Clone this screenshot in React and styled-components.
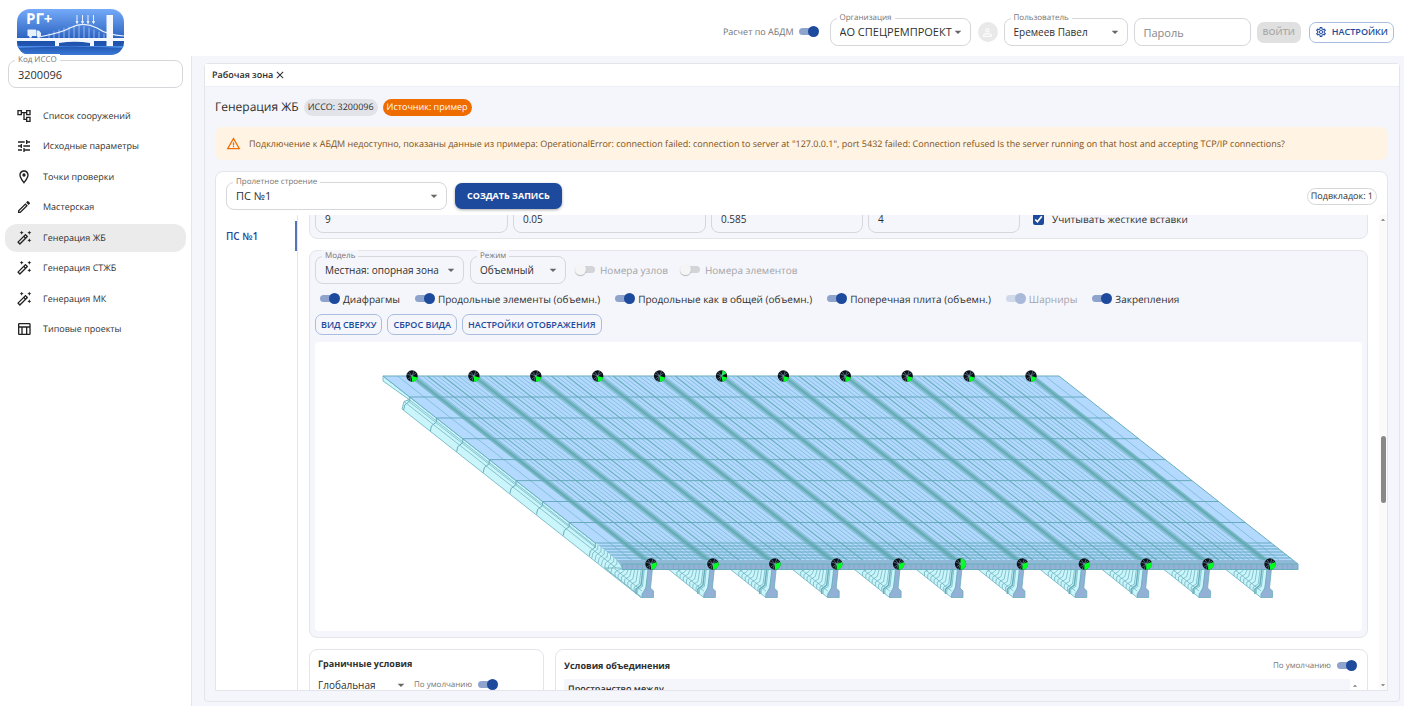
import React, { useId } from "react";
import styled, { createGlobalStyle, css } from "styled-components";
import {
  MdOutlineAccountTree,
  MdTune,
  MdOutlineLocationOn,
  MdOutlineEdit,
  MdOutlineAutoFixHigh,
  MdOutlineTableChart,
  MdOutlineSettings,
  MdWarningAmber,
  MdPersonOutline,
  MdArrowDropDown,
  MdArrowDropUp,
  MdClose,
} from "react-icons/md";

const c = {
  primary: "#1d4a9c",
  primaryBorder: "#a9bde0",
  text: "#2f2f2f",
  muted: "#757575",
  disabled: "#a3a4a7",
  border: "#d6d7db",
  line: "#e3e5ea",
  bg: "#f5f6fb",
};

const GlobalStyle = createGlobalStyle`
  *, *::before, *::after { box-sizing: border-box; }
  body {
    margin: 0;
    background: #fff;
    color: ${c.text};
    font-family: "Open Sans", "Noto Sans", sans-serif;
    font-size: 10px;
    line-height: 16px;
    text-rendering: geometricPrecision;
  }
  button, input, select { font: inherit; color: inherit; margin: 0; }
  h1, h2, p, ul { margin: 0; padding: 0; font-weight: 400; }
`;

/* ---------- shell ---------- */

const Shell = styled.div`
  display: grid;
  grid-template-columns: 191px minmax(0, 1fr);
  height: 100vh;
  padding: 0 17px 11px 0;
  overflow: hidden;
`;

const Sidebar = styled.aside`
  display: flex;
  flex-direction: column;
  padding: 9px 8px 0;
`;

const Main = styled.div`
  display: flex;
  flex-direction: column;
  min-width: 0;
  min-height: 0;
`;

const TopBar = styled.header`
  display: flex;
  flex: none;
  align-items: center;
  justify-content: flex-end;
  gap: 11px;
  height: 56px;
  padding: 8px 10px 0 0;
`;

const LoginGroup = styled.div`
  display: flex;
  align-items: center;
  gap: 6px;
`;

const ButtonGroup = styled.div`
  display: flex;
  align-items: center;
  gap: 8px;
`;

const Desk = styled.main`
  display: flex;
  flex: 1;
  min-height: 0;
  padding: 7px 4px 4px 12px;
  background: ${c.bg};
  border-left: 1px solid ${c.line};
`;

const Workspace = styled.section`
  display: flex;
  flex: 1;
  flex-direction: column;
  min-width: 0;
  border: 1px solid ${c.line};
  border-radius: 4px;
`;

/* ---------- form parts ---------- */

const FieldBox = styled.div`
  position: relative;
  display: flex;
  flex: none;
  width: ${(p) => p.$w || "auto"};
  min-width: 0;
  height: 28px;
`;

const FieldLabel = styled.label`
  position: absolute;
  top: -6px;
  left: 7px;
  padding: 0 3px;
  background: ${(p) => p.$bg || "#fff"};
  color: ${c.muted};
  font-size: 8px;
  line-height: 12px;
  white-space: nowrap;
`;

const control = css`
  width: 100%;
  height: 100%;
  padding: 0 9px;
  border: 1px solid ${c.border};
  border-radius: 8px;
  background: transparent;
  font-size: ${(p) => p.$size || 11}px;
  outline: none;
`;

const TextInput = styled.input`
  ${control}
  &::placeholder { color: #85868a; opacity: 1; }
`;

const SelectInput = styled.select`
  ${control}
  appearance: none;
  ${(p) => p.$plain && css`border: 0; padding: 0;`}
`;

const Arrow = styled(MdArrowDropDown)`
  position: absolute;
  right: ${(p) => p.$right ?? 5}px;
  top: 6px;
  width: 16px;
  height: 16px;
  color: #666;
  pointer-events: none;
`;

const Switch = styled.input.attrs({ type: "checkbox", role: "switch" })`
  position: relative;
  flex: none;
  appearance: none;
  width: 20px;
  height: 12px;
  opacity: ${(p) => (p.disabled && p.defaultChecked ? 0.35 : 1)};
  &::before {
    content: "";
    position: absolute;
    inset: 2px 0 3px 2px;
    border-radius: 4px;
    background: #d3d4d8;
  }
  &::after {
    content: "";
    position: absolute;
    top: 0;
    left: 0;
    width: 11px;
    height: 11px;
    border-radius: 50%;
    background: #f5f5f5;
    box-shadow: 0 1px 1px rgba(0, 0, 0, 0.25);
  }
  &:checked::before { inset: 2px 3px 3px 0; background: #8ea4cd; }
  &:checked::after { left: 9px; background: ${c.primary}; box-shadow: none; }
`;

const SwitchLabel = styled.label`
  display: flex;
  align-items: center;
  gap: ${(p) => p.$gap || 3}px;
  color: ${(p) => (p.$tone ? c[p.$tone] : c.text)};
  font-size: ${(p) => p.$size || 10}px;
  white-space: nowrap;
`;

const OutlineButton = styled.button`
  display: flex;
  align-items: center;
  gap: 5px;
  height: 21px;
  padding: 0 5px;
  border: 1px solid ${c.primaryBorder};
  border-radius: 7px;
  background: transparent;
  color: ${c.primary};
  font-size: 9px;
  font-weight: 600;
  white-space: nowrap;
`;

const DisabledButton = styled(OutlineButton)`
  padding: 0 6px;
  border: 0;
  background: #e0e0e0;
  color: #a9a9a9;
`;

const PrimaryButton = styled.button`
  height: 26px;
  padding: 0 12px;
  border: 0;
  border-radius: 7px;
  background: ${c.primary};
  box-shadow: 0 1px 3px rgba(0, 0, 0, 0.35);
  color: #fff;
  font-size: 9px;
  font-weight: 700;
  white-space: nowrap;
`;

const Chip = styled.span`
  display: inline-flex;
  align-items: center;
  height: 17px;
  padding: 0 3px;
  border-radius: 9px;
  font-size: 9px;
  white-space: nowrap;
  background: ${(p) => p.$bg || "transparent"};
  color: ${(p) => p.$color || c.text};
  border: 1px solid ${(p) => p.$border || "transparent"};
`;

function SelectField({ label, value, w, bg, size }) {
  const id = useId();
  return (
    <FieldBox $w={w}>
      <SelectInput id={id} defaultValue={value} $size={size}>
        <option>{value}</option>
      </SelectInput>
      <FieldLabel htmlFor={id} $bg={bg}>{label}</FieldLabel>
      <Arrow />
    </FieldBox>
  );
}

/* ---------- sidebar ---------- */

const Logo = styled.svg`
  display: block;
  flex: none;
  width: 107px;
  height: 46px;
  margin: 0 0 5px 9px;
`;

const NavList = styled.ul`
  display: flex;
  flex-direction: column;
  justify-content: space-between;
  height: 241px;
  margin: 14px -3px 0 -3px;
  list-style: none;
`;

const NavLink = styled.a`
  display: flex;
  align-items: center;
  gap: 11px;
  height: 28px;
  padding-left: 11px;
  border-radius: 12px;
  background: ${(p) => (p.$active ? "#ebebeb" : "transparent")};
  color: ${c.text};
  font-size: 9px;
  text-decoration: none;
  svg { width: 16px; height: 16px; color: #222; }
`;

const NAV = [
  [MdOutlineAccountTree, "Список сооружений"],
  [MdTune, "Исходные параметры"],
  [MdOutlineLocationOn, "Точки проверки"],
  [MdOutlineEdit, "Мастерская"],
  [MdOutlineAutoFixHigh, "Генерация ЖБ", true],
  [MdOutlineAutoFixHigh, "Генерация СТЖБ"],
  [MdOutlineAutoFixHigh, "Генерация МК"],
  [MdOutlineTableChart, "Типовые проекты"],
];

function BrandLogo() {
  const hangers = [];
  for (let x = 32; x < 88; x += 5) {
    const y = x < 66 ? 27 - 11 * Math.sin(((x - 26) / 40) * 1.57) : 16 + (x - 66) * 0.42;
    hangers.push(<path key={x} d={`M${x} ${y}V29`} />);
  }
  return (
    <Logo viewBox="0 0 107 46" role="img" aria-label="РГ+">
      <defs>
        <linearGradient id="sky" x1="0" y1="0" x2="0" y2="1">
          <stop offset="0" stopColor="#74aaf8" />
          <stop offset="0.6" stopColor="#3168c4" />
          <stop offset="0.68" stopColor="#1c50a8" />
          <stop offset="0.8" stopColor="#2156b2" />
          <stop offset="1" stopColor="#3a78d6" />
        </linearGradient>
        <clipPath id="logo-shape"><rect width="107" height="46" rx="13" /></clipPath>
      </defs>
      <g clipPath="url(#logo-shape)">
        <rect width="107" height="46" fill="url(#sky)" />
        <path d="M0 37H107V39Q54 36 0 39Z" fill="#4d8ae2" />
        <g stroke="#b9d4fb" strokeWidth="0.7" fill="none">{hangers}</g>
        <path d="M22 28Q44 24 54 18.500Q67 12 80 19Q90 26 107 27" stroke="#eaf2ff" strokeWidth="1.200" fill="none" />
        <path d="M0 29H107V32H77V37H73V34Q58 31.500 42 34V37H38V32H0Z" fill="#f3f8ff" />
        <rect x="89.500" y="6" width="6.500" height="31" fill="#f5f9ff" />
        <g fill="#e8f1ff">
          <rect x="10.500" y="20.500" width="8.500" height="6.500" rx="0.500" />
          <path d="M19.500 21.500H22L24 24V27H19.500Z" />
          <circle cx="13.500" cy="27.500" r="1.400" />
          <circle cx="21.500" cy="27.500" r="1.400" />
        </g>
        <g stroke="#e6f0ff" strokeWidth="1" fill="#e6f0ff">
          {[60, 65.5, 71, 76.5].map((x) => (
            <path key={x} d={`M${x} 6V14M${x - 1} 12.500L${x} 14.500L${x + 1} 12.500Z`} />
          ))}
        </g>
        <text x="9" y="15" fill="#fff" fontFamily="Open Sans, sans-serif" fontSize="15" fontWeight="700">РГ+</text>
      </g>
    </Logo>
  );
}

/* ---------- workspace ---------- */

const TabBar = styled.div`
  display: flex;
  flex: none;
  align-items: center;
  gap: 1px;
  height: 23px;
  padding-left: 7px;
  background: #fff;
  border-bottom: 1px solid #eceef3;
  font-size: 9px;
  font-weight: 600;
`;

const IconButton = styled.button`
  display: flex;
  padding: 0;
  border: 0;
  background: none;
  svg { width: 12px; height: 12px; }
`;

const Page = styled.div`
  display: flex;
  flex: 1;
  flex-direction: column;
  gap: 11px;
  min-height: 0;
  padding: 11px 11px 10px 10px;
`;

const TitleRow = styled.div`
  display: flex;
  align-items: center;
  gap: 5px;
  height: 18px;
`;

const Title = styled.h1`
  font-size: 12px;
  line-height: 18px;
`;

const Alert = styled.p`
  display: flex;
  flex: none;
  align-items: center;
  gap: 8px;
  height: 33px;
  padding: 0 11px;
  border-radius: 8px;
  background: #fff3e4;
  color: #7d5215;
  font-size: 9px;
  white-space: nowrap;
  svg { width: 15px; height: 15px; color: #ef6c00; flex: none; }
`;

const Sheet = styled.section`
  display: flex;
  flex: 1;
  flex-direction: column;
  min-height: 0;
  border: 1px solid ${c.line};
  border-radius: 8px 8px 0 0;
  background: #fff;
`;

const SheetHead = styled.div`
  display: flex;
  flex: none;
  align-items: center;
  gap: 8px;
  height: 43px;
  padding: 5px 10px 0 10px;
  > :last-child { margin-left: auto; }
`;

const SheetBody = styled.div`
  display: grid;
  flex: 1;
  grid-template-columns: 82px minmax(0, 1fr) 19px;
  min-height: 0;
  overflow: hidden;
`;

const SideTabs = styled.div`
  padding-top: 6px;
  border-right: 1px solid ${c.line};
`;

const SideTab = styled.button`
  display: block;
  width: 100%;
  height: 30px;
  padding: 0 0 0 10px;
  border: 0;
  border-right: 2px solid #5475b5;
  background: none;
  color: ${c.primary};
  font-size: 10px;
  font-weight: 600;
  text-align: left;
`;

const Scroller = styled.div`
  display: flex;
  flex-direction: column;
  gap: 11px;
  min-height: 0;
  padding-left: 11px;
  overflow: hidden;
  > :first-child { margin-top: -16px; }
`;

const Card = styled.section`
  flex: none;
  padding: 5px 5px ${(p) => p.$pb || 6}px;
  border: 1px solid ${c.line};
  border-radius: 8px;
  background: ${(p) => (p.$white ? "#fff" : c.bg)};
`;

const FieldRow = styled.div`
  display: grid;
  grid-template-columns: 193px 193px 152px 152px 1fr;
  gap: 5px;
  align-items: center;
`;

const CheckLabel = styled.label`
  display: flex;
  align-items: center;
  gap: 8px;
  padding-left: 8px;
`;

const Checkbox = styled.input.attrs({ type: "checkbox" })`
  width: 11px;
  height: 11px;
  accent-color: ${c.primary};
`;

const ToolRow = styled.div`
  display: flex;
  align-items: center;
  gap: ${(p) => p.$gap}px;
  height: ${(p) => p.$h}px;
  padding-left: ${(p) => p.$pl || 0}px;
`;

const Viewer = styled.svg`
  display: block;
  width: 100%;
  height: 289px;
  margin-top: 7px;
  background: #fff;
  border-radius: 4px;
`;

const TrackColumn = styled.div`
  display: flex;
  flex-direction: column;
  align-items: center;
  justify-self: end;
  width: 8px;
  background: #fbfbfb;
  color: #777;
  svg { width: 10px; height: 10px; flex: none; }
`;

const Thumb = styled.div`
  flex: 67 0 0;
  width: 5px;
  border-radius: 3px;
  background: #898989;
`;

const Spacer = styled.div`
  flex: ${(p) => p.$grow} 0 0;
`;

const CardPair = styled.div`
  display: grid;
  flex: none;
  grid-template-columns: 235px minmax(0, 1fr);
  gap: 11px;
`;

const SubCard = styled(Card)`
  height: 120px;
  padding: 6px 8px;
`;

const SubHead = styled.div`
  display: flex;
  align-items: center;
  justify-content: space-between;
  height: ${(p) => p.$h}px;
  padding-right: 2px;
`;

const SubTitle = styled.h2`
  font-size: 9px;
  font-weight: 700;
`;

const MiniTable = styled.div`
  display: flex;
  justify-content: space-between;
  height: 80px;
  margin-top: 3px;
  background: ${c.bg};
`;

const MiniHead = styled.div`
  padding: 4px;
  font-size: 9px;
  line-height: 12px;
  font-weight: 600;
`;

const MiniTrack = styled.div`
  display: flex;
  flex-direction: column;
  width: 9px;
  padding-top: 2px;
  background: #fff;
  color: #777;
  svg { width: 10px; height: 10px; }
`;

const Avatar = styled.span`
  display: grid;
  place-items: center;
  width: 20px;
  height: 20px;
  margin-left: 1px;
  border-radius: 50%;
  background: #e9e9e9;
  color: #fff;
  svg { width: 13px; height: 13px; }
`;

/* ---------- bridge model ---------- */

const PITCH = 61.9;
const RUN = 239 / 188;
const TEAL = "#69aebb";

function line(x, y1, y2) {
  return `M${x + (y1 - 376) * RUN} ${y1}L${x + (y2 - 376) * RUN} ${y2}`;
}

function Support({ x, y, kind }) {
  const wedge = {
    back: "M0 0L5.500 1.500A5.700 5.700 0 0 1 0 5.700Z",
    front: "M0 0L5.500 -2A5.700 5.700 0 0 1 0 5.700Z",
    mid: "M0 0L1 -5.600A5.700 5.700 0 0 1 5 -2.600ZM0 0L5.500 1.500A5.700 5.700 0 0 1 1 5.600Z",
    half: "M0 0L0 -5.700A5.700 5.700 0 0 1 0 5.700Z",
  }[kind];
  return (
    <g transform={`translate(${x} ${y})`}>
      <circle r="5.700" fill="#0c0f16" />
      <path d={wedge} fill="#00ff22" />
      <path d="M-5 -2L0 0L-2 5M2 -5L0 0M-4 3L0 0L-3 -4M0 0L4 -3" stroke="#8fb6d2" strokeWidth="0.500" fill="none" />
    </g>
  );
}

function BridgeModel() {
  const girders = Array.from({ length: 11 }, (_, i) => i);
  const fine = [];
  const strong = [];
  const bands = [];
  girders.forEach((i) => {
    const x = 412 + i * PITCH;
    bands.push(`M${x - 4} 376H${x + 4}L${x + 243} 564H${x + 235}Z`);
    if (i < 10) {
      for (let k = 1; k < 12; k += 1) {
        const target = k === 6 || k === 3 ? strong : fine;
        target.push(line(x + k * 5.16, 376, 564));
      }
    }
  });
  fine.push(line(397.500, 376, 564), line(1045, 376, 564));
  const rows = [397, 418, 438.700, 459.600, 480.600, 501.500, 522.500, 543, 546, 549, 552, 555, 558, 561, 564];
  const sideSteps = [397, 418, 438.700, 459.600, 480.600, 501.500, 522.500, 543];
  const denseSteps = [545, 547.500, 550, 552.500, 555, 557.500, 560];
  const jog = (y) => {
    const x = 383 + (y - 376) * RUN;
    return `M${x} ${y}V${y + 4}L${x - 5} ${y + 8}L${x - 6} ${y + 13}`;
  };
  return (
    <Viewer viewBox="315 342 1047 289" role="img" aria-label="Объемная модель пролетного строения">
      <path d="M383 376L622 564L653 566L641 597.500L402 409L404 401.500L409 399.500L383 381Z" fill="#c9f5fb" stroke={TEAL} strokeWidth="0.800" />
      <g fill="none" stroke={TEAL} strokeWidth="0.700">
        <path d="M409 399.500L622 567M404 401.500L643 589M407 400L646 587" />
        {sideSteps.map((y) => <path key={y} d={jog(y)} strokeWidth="1" />)}
      </g>
      {girders.map((i) => {
        const x = 651 + i * PITCH;
        return (
          <g key={i}>
            <path d={`M${x - 46} 568H${x - 2}L${x - 5} 587L${x - 9} 597.500Z`} fill="#c9f5fb" stroke={TEAL} strokeWidth="0.800" />
            <g stroke={TEAL} strokeWidth="0.700" fill="none">
              {[0, 1, 2, 3, 4, 5, 6, 7].map((k) => {
                const bx = x - 36 + k * 3.2;
                const by = 576 + k * 2.5;
                return <path key={k} d={`M${bx + 7} 569L${bx + 5} ${by - 7}L${bx} ${by - 4}V${by}`} />;
              })}
              <path d={`M${x - 36} 569L${x - 9} 591`} />
              <path d={`M${x - 8} 568L${x - 10} 585L${x - 15} 589V594`} strokeWidth="1.500" />
            </g>
            <path d={`M${x - 3} 568H${x + 1.5}L${x - 0.500} 588L${x + 2.5} 591V597.500H${x - 9}V594L${x - 5} 588Z`} fill="#93b0d6" stroke={TEAL} strokeWidth="0.800" />
          </g>
        );
      })}
      <path d="M383 376H1059L1298 564H622Z" fill="#b3d9ff" stroke={TEAL} strokeWidth="1" />
      <path d={fine.join("")} stroke="#74b3cd" strokeWidth="0.700" fill="none" />
      <path d={strong.join("")} stroke={TEAL} strokeWidth="1.100" fill="none" />
      <path d={bands.join("")} fill="#7ab9c6" />
      <path d={girders.map((i) => line(412 + i * PITCH, 376, 564)).join("")} stroke="#62a8b4" strokeWidth="1.500" />
      <path d={rows.map((y) => `M${383 + (y - 376) * RUN} ${y}H${1059 + (y - 376) * RUN}`).join("")} stroke="#5fa6b5" strokeWidth="0.900" />
      <path d="M596 543L622 564L622 569L596 548Z" fill="#c9f5fb" />
      <g fill="none" stroke={TEAL} strokeWidth="0.700">
        {denseSteps.map((y) => <path key={y} d={jog(y)} />)}
      </g>
      <path d="M617 560H1293L1298 564V569.500H623Z" fill="#8fb9d6" />
      <path d="M622 564H1298V569.500H622Z" fill="#93b0d6" stroke={TEAL} strokeWidth="1" />
      <path d={Array.from({ length: 130 }, (_, k) => `M${627 + k * 5.16} 564V569`).join("")} stroke={TEAL} strokeWidth="0.600" />
      {girders.map((i) => (
        <React.Fragment key={i}>
          <Support x={412 + i * PITCH} y={376} kind={i === 5 ? "mid" : "back"} />
          <Support x={651 + i * PITCH} y={564} kind={i === 5 ? "half" : "front"} />
        </React.Fragment>
      ))}
    </Viewer>
  );
}

/* ---------- page ---------- */

export default function App() {
  return (
    <>
      <GlobalStyle />
      <Shell>
        <Sidebar>
          <BrandLogo />
          <FieldBox>
            <TextInput id="isso" defaultValue="3200096" />
            <FieldLabel htmlFor="isso">Код ИССО</FieldLabel>
          </FieldBox>
          <nav>
            <NavList>
              {NAV.map(([Icon, label, active]) => (
                <li key={label}>
                  <NavLink href="#" $active={active}><Icon />{label}</NavLink>
                </li>
              ))}
            </NavList>
          </nav>
        </Sidebar>
        <Main>
          <TopBar>
            <SwitchLabel $gap={5} $size={9} $tone="muted">
              Расчет по АБДМ
              <Switch defaultChecked />
            </SwitchLabel>
            <LoginGroup>
              <SelectField label="Организация" value="АО СПЕЦРЕМПРОЕКТ" w="141px" />
              <Avatar><MdPersonOutline /></Avatar>
              <SelectField label="Пользователь" value="Еремеев Павел" w="124px" size={10} />
              <FieldBox $w="117px">
                <TextInput type="password" placeholder="Пароль" aria-label="Пароль" />
              </FieldBox>
              <ButtonGroup>
                <DisabledButton disabled>ВОЙТИ</DisabledButton>
                <OutlineButton><MdOutlineSettings size={12} />НАСТРОЙКИ</OutlineButton>
              </ButtonGroup>
            </LoginGroup>
          </TopBar>
          <Desk>
            <Workspace>
              <TabBar>
                Рабочая зона
                <IconButton aria-label="Закрыть"><MdClose /></IconButton>
              </TabBar>
              <Page>
                <TitleRow>
                  <Title>Генерация ЖБ</Title>
                  <Chip $bg="#e2e3e8">ИССО: 3200096</Chip>
                  <Chip $bg="#ef6c00" $color="#fff">Источник: пример</Chip>
                </TitleRow>
                <Alert>
                  <MdWarningAmber />
                  Подключение к АБДМ недоступно, показаны данные из примера: OperationalError: connection failed: connection to server at "127.0.0.1", port 5432 failed: Connection refused Is the server running on that host and accepting TCP/IP connections?
                </Alert>
                <Sheet>
                  <SheetHead>
                    <SelectField label="Пролетное строение" value="ПС №1" w="221px" />
                    <PrimaryButton>СОЗДАТЬ ЗАПИСЬ</PrimaryButton>
                    <Chip $border={c.border}>Подвкладок: 1</Chip>
                  </SheetHead>
                  <SheetBody>
                    <SideTabs>
                      <SideTab>ПС №1</SideTab>
                    </SideTabs>
                    <Scroller>
                      <Card $pb={5}>
                        <FieldRow>
                          {["9", "0.05", "0.585", "4"].map((v) => (
                            <FieldBox key={v}><TextInput defaultValue={v} aria-label={v} $size={10} /></FieldBox>
                          ))}
                          <CheckLabel><Checkbox defaultChecked />Учитывать жесткие вставки</CheckLabel>
                        </FieldRow>
                      </Card>
                      <Card>
                        <ToolRow $gap={6} $h={28}>
                          <SelectField label="Модель" value="Местная: опорная зона" w="149px" bg={c.bg} size={10} />
                          <SelectField label="Режим" value="Объемный" w="96px" bg={c.bg} size={10} />
                          <ToolRow $gap={12} $h={28} $pl={3}>
                            <SwitchLabel $gap={5} $tone="disabled"><Switch disabled />Номера узлов</SwitchLabel>
                            <SwitchLabel $gap={5} $tone="disabled"><Switch disabled />Номера элементов</SwitchLabel>
                          </ToolRow>
                        </ToolRow>
                        <ToolRow $gap={15} $h={30} $pl={5}>
                          <SwitchLabel><Switch defaultChecked />Диафрагмы</SwitchLabel>
                          <SwitchLabel><Switch defaultChecked />Продольные элементы (объемн.)</SwitchLabel>
                          <SwitchLabel><Switch defaultChecked />Продольные как в общей (объемн.)</SwitchLabel>
                          <SwitchLabel><Switch defaultChecked />Поперечная плита (объемн.)</SwitchLabel>
                          <SwitchLabel $tone="disabled"><Switch defaultChecked disabled />Шарниры</SwitchLabel>
                          <SwitchLabel><Switch defaultChecked />Закрепления</SwitchLabel>
                        </ToolRow>
                        <ToolRow $gap={5} $h={21}>
                          <OutlineButton>ВИД СВЕРХУ</OutlineButton>
                          <OutlineButton>СБРОС ВИДА</OutlineButton>
                          <OutlineButton>НАСТРОЙКИ ОТОБРАЖЕНИЯ</OutlineButton>
                        </ToolRow>
                        <BridgeModel />
                      </Card>
                      <CardPair>
                        <SubCard $white>
                          <SubHead $h={16}><SubTitle>Граничные условия</SubTitle></SubHead>
                          <ToolRow $gap={5} $h={25}>
                            <FieldBox $w="91px">
                              <SelectInput $plain $size={10} defaultValue="Глобальная" aria-label="Граничные условия">
                                <option>Глобальная</option>
                              </SelectInput>
                              <Arrow $right={0} />
                            </FieldBox>
                            <SwitchLabel $gap={6} $size={8} $tone="muted">По умолчанию<Switch defaultChecked /></SwitchLabel>
                          </ToolRow>
                        </SubCard>
                        <SubCard $white>
                          <SubHead $h={20}>
                            <SubTitle>Условия объединения</SubTitle>
                            <SwitchLabel $gap={6} $size={8} $tone="muted">По умолчанию<Switch defaultChecked /></SwitchLabel>
                          </SubHead>
                          <MiniTable>
                            <MiniHead>Пространство между</MiniHead>
                            <MiniTrack><MdArrowDropUp /></MiniTrack>
                          </MiniTable>
                        </SubCard>
                      </CardPair>
                    </Scroller>
                    <TrackColumn>
                      <MdArrowDropUp />
                      <Spacer $grow={211} />
                      <Thumb />
                      <Spacer $grow={177} />
                      <MdArrowDropDown />
                    </TrackColumn>
                  </SheetBody>
                </Sheet>
              </Page>
            </Workspace>
          </Desk>
        </Main>
      </Shell>
    </>
  );
}
